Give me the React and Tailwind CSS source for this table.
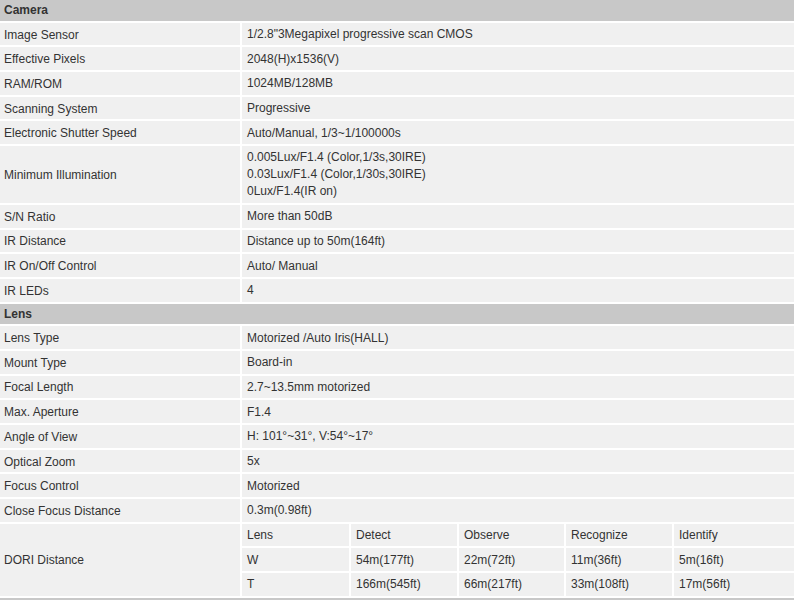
const camera = [
  ["Image Sensor", ["1/2.8\"3Megapixel progressive scan CMOS"]],
  ["Effective Pixels", ["2048(H)x1536(V)"]],
  ["RAM/ROM", ["1024MB/128MB"]],
  ["Scanning System", ["Progressive"]],
  ["Electronic Shutter Speed", ["Auto/Manual, 1/3~1/100000s"]],
  [
    "Minimum Illumination",
    [
      "0.005Lux/F1.4 (Color,1/3s,30IRE)",
      "0.03Lux/F1.4 (Color,1/30s,30IRE)",
      "0Lux/F1.4(IR on)",
    ],
  ],
  ["S/N Ratio", ["More than 50dB"]],
  ["IR Distance", ["Distance up to 50m(164ft)"]],
  ["IR On/Off Control", ["Auto/ Manual"]],
  ["IR LEDs", ["4"]],
];

const lens = [
  ["Lens Type", ["Motorized /Auto Iris(HALL)"]],
  ["Mount Type", ["Board-in"]],
  ["Focal Length", ["2.7~13.5mm motorized"]],
  ["Max. Aperture", ["F1.4"]],
  ["Angle of View", ["H: 101°~31°, V:54°~17°"]],
  ["Optical Zoom", ["5x"]],
  ["Focus Control", ["Motorized"]],
  ["Close Focus Distance", ["0.3m(0.98ft)"]],
];

const dori = [
  ["Lens", "Detect", "Observe", "Recognize", "Identify"],
  ["W", "54m(177ft)", "22m(72ft)", "11m(36ft)", "5m(16ft)"],
  ["T", "166m(545ft)", "66m(217ft)", "33m(108ft)", "17m(56ft)"],
];

const SectionHeader = ({ title }) => (
  <div className="h-[20.7px] bg-[#c8c8c8] px-[4px] font-bold leading-[20.7px] text-[#333]">
    {title}
  </div>
);

const Row = ({ label, lines }) => (
  <div className="grid grid-cols-[240px_1fr] gap-x-[2px]">
    <div className="flex items-center bg-[#f0f0f0] px-[4px] pt-[1px]">{label}</div>
    <div className="bg-[#f0f0f0] px-[5px] pt-[3.35px] pb-[2.35px] leading-[17px]">
      {lines.map((l) => (
        <div key={l}>{l}</div>
      ))}
    </div>
  </div>
);

export default function App() {
  return (
    <div
      className="flex w-[794px] flex-col gap-[2px] bg-white text-[12px] text-[#333]"
      style={{ fontFamily: '"Liberation Sans", Arial, sans-serif' }}
    >
      <SectionHeader title="Camera" />
      {camera.map(([label, lines]) => (
        <Row key={label} label={label} lines={lines} />
      ))}
      <SectionHeader title="Lens" />
      {lens.map(([label, lines]) => (
        <Row key={label} label={label} lines={lines} />
      ))}
      <div className="grid grid-cols-[240px_1fr] gap-x-[2px]">
        <div className="flex items-center bg-[#f0f0f0] px-[4px] pt-[1px]">DORI Distance</div>
        <div className="grid grid-cols-[107px_106px_105px_106px_1fr] gap-[2px]">
          {dori.flat().map((cell, i) => (
            <div
              key={i}
              className="bg-[#f0f0f0] px-[5px] pt-[3.35px] pb-[2.35px] leading-[17px]"
            >
              {cell}
            </div>
          ))}
        </div>
      </div>
      <SectionHeader title="" />
    </div>
  );
}
